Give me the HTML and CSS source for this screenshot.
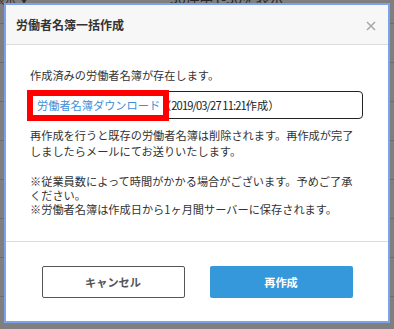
FILE: index.html
```html
<!DOCTYPE html>
<html lang="ja">
<head>
    <meta charset="UTF-8">
    <meta name="viewport" content="width=device-width, initial-scale=1.0">
    <title>労働者名簿一括作成</title>
    <link rel="stylesheet" href="styles.css">
</head>
<body>

    <!-- List page behind the dialog -->
    <div class="page">
        <div class="page-top">
            <span class="page-size">表示 ▼</span>
            <span class="page-count">36件中1-36を表示</span>
        </div>
        <div class="row"></div>
        <div class="row"></div>
        <div class="row"></div>
        <div class="row"></div>
        <div class="row"></div>
        <div class="row"></div>
        <div class="row"></div>
        <div class="row"></div>
    </div>

    <!-- Dialog -->
    <div class="modal">
        <div class="modal-header">
            <h2 class="modal-title">労働者名簿一括作成</h2>
            <span class="modal-close">
                <svg width="10" height="10" viewBox="0 0 10 10">
                    <path d="M1 1 L9 9 M9 1 L1 9" stroke="#a8a8a8" stroke-width="1.5" fill="none"/>
                </svg>
            </span>
        </div>

        <div class="modal-body">
            <p class="lead">作成済みの労働者名簿が存在します。</p>
            <div class="file-box">
                <a href="#" class="file-link">労働者名簿ダウンロード</a><span class="file-date">（<span class="date">2019/03/27 11:21</span>作成）</span>
                <span class="mark"></span>
            </div>
            <p class="info">再作成を行うと既存の労働者名簿は削除されます。再作成が完了<br>しましたらメールにてお送りいたします。</p>
            <p class="notes">※従業員数によって時間がかかる場合がございます。予めご了承<br>ください。<br>※労働者名簿は作成日から1ヶ月間サーバーに保存されます。</p>
        </div>

        <div class="modal-footer">
            <button class="btn btn-cancel">キャンセル</button>
            <button class="btn btn-primary">再作成</button>
        </div>
    </div>

</body>
</html>
```

FILE: styles.css
```css
body {
    margin: 0;
    width: 394px;
    height: 329px;
    overflow: hidden;
    position: relative;
    background-color: #7f7f7f;
    font-family: "Noto Sans CJK JP", "Noto Sans", sans-serif;
    color: #333;
}

/* page behind the overlay */
.page-top {
    height: 23px;
    border-bottom: 1px solid #6c6c6c;
    position: relative;
}
.page-size {
    position: absolute;
    left: -6px;
    top: -9px;
    font-size: 11px;
    color: #2e2e2e;
}
.page-count {
    position: absolute;
    left: 170px;
    top: -12px;
    font-size: 14px;
    color: #2a2a2a;
}
.row {
    height: 38px;
    border-bottom: 1px solid #6c6c6c;
}

/* dialog */
.modal {
    position: absolute;
    left: 4px;
    top: 3px;
    width: 382px;
    height: 316px;
    border: 2px solid #7ca3ea;
    background-color: #fff;
    display: flex;
    flex-direction: column;
}
.modal-header {
    height: 39px;
    border-bottom: 1px solid #dcdcdc;
    background-color: #f7f7f7;
    display: flex;
    align-items: center;
    justify-content: space-between;
    padding: 0 12px 0 10px;
}
.modal-title {
    margin: 0;
    font-size: 12px;
    font-weight: bold;
    color: #333;
}
.modal-close {
    display: flex;
    margin-top: 2px;
}

.modal-body {
    padding: 22px 25px 25px 24px;
    font-size: 11.2px;
}
.modal-body p {
    margin: 0;
}
.lead {
    line-height: 16.7px;
}
.file-box {
    position: relative;
    margin-top: 7px;
    height: 26px;
    border: 1px solid #222;
    border-radius: 4px;
    display: flex;
    align-items: center;
    padding-left: 6px;
    color: #222;
}
.file-link {
    color: #3d8fd8;
    text-decoration: none;
}
.date {
    letter-spacing: -0.9px;
}
.mark {
    position: absolute;
    left: -4px;
    top: -2px;
    width: 130px;
    height: 19px;
    border: 6px solid #f00;
}
.info {
    margin-top: 8px !important;
    line-height: 16.7px;
}
.notes {
    margin-top: 14px !important;
    line-height: 14px;
}

.modal-footer {
    flex: 1;
    border-top: 1px solid #dcdcdc;
    display: flex;
    justify-content: center;
    gap: 25px;
    padding-top: 24px;
}
.btn {
    width: 143px;
    height: 32px;
    font-family: inherit;
    font-size: 11.2px;
    font-weight: bold;
    border-radius: 2px;
    cursor: pointer;
}
.btn-cancel {
    background-color: #fff;
    border: 1px solid #555;
    color: #555;
}
.btn-primary {
    background-color: #3498db;
    border: none;
    color: #fff;
}
.btn-primary:hover {
    background-color: #2b88c8;
}
```
